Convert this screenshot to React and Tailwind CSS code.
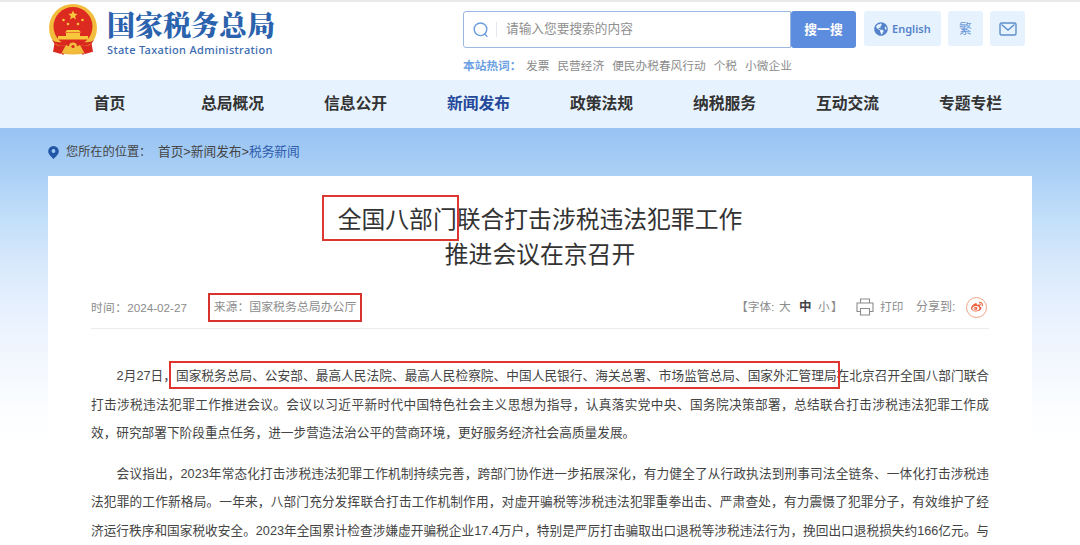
import React from 'react';
import { FaGlobeAmericas, FaWeibo } from 'react-icons/fa';

const navItems = ['首页', '总局概况', '信息公开', '新闻发布', '政策法规', '纳税服务', '互动交流', '专题专栏'];
const hotWords = ['发票', '民营经济', '便民办税春风行动', '个税', '小微企业'];

const Emblem = () => (
  <svg className="w-[50px] h-[52px] shrink-0" viewBox="0 0 50 52">
    <path d="M7 36l-2 12 6-1 4 4 5-5h10l5 5 4-4 6 1-2-12z" fill="#d8281f" />
    <path d="M14 44q11 3 22 0l1 5q-12 3-24 0z" fill="#f0b93a" />
    <circle cx="25" cy="24" r="24" fill="#f2bd3c" />
    <circle cx="25" cy="22.500" r="19.500" fill="#dd2a20" />
    <path d="M25 6.500l1.300 3.100 3.300.3-2.500 2.200.8 3.300-2.900-1.800-2.900 1.800.8-3.300-2.500-2.200 3.300-.3z" fill="#f8c83c" />
    <g fill="#f8c83c">
      <circle cx="15.500" cy="16" r="1.300" />
      <circle cx="20" cy="20" r="1.300" />
      <circle cx="30" cy="20" r="1.300" />
      <circle cx="34.500" cy="16" r="1.300" />
      <path d="M19 26h12l2 2.500H17zM18 29h14v3h-14zM10 32h30v3.500H10z" />
    </g>
    <path d="M4 36q4 3 10 2l7-1 4 2 4-2 7 1q6 1 10-2l-3 4q-6 3-11 1l-7 3-7-3q-5 2-11-1z" fill="#d8281f" />
    <path d="M7 41q6 1 11 0l-5 9-7-2zM43 41q-6 1-11 0l5 9 7-2z" fill="#d8281f" />
    <circle cx="25" cy="42.500" r="4" fill="#f2bd3c" />
    <circle cx="25" cy="42.500" r="1.600" fill="#d8281f" />
  </svg>
);

const SearchIcon = () => (
  <svg className="w-4 h-4 shrink-0" viewBox="0 0 16 16" fill="none" stroke="#6c9ddf" strokeWidth="1.4">
    <circle cx="7.500" cy="7.300" r="6.300" />
    <path d="M11.600 11.800l2.300 2.600" strokeLinecap="round" />
  </svg>
);

const MailIcon = () => (
  <svg className="w-[18px] h-[14px]" viewBox="0 0 18 14" fill="none" stroke="#5f8fcb" strokeWidth="1.4">
    <rect x="1" y="1" width="16" height="12" rx="1.500" />
    <path d="M2.500 2.500L9 8l6.500-5.500" />
  </svg>
);

const PinIcon = () => (
  <svg className="w-[11px] h-[13px] shrink-0" viewBox="0 0 11 13">
    <path d="M5.500 0A5.300 5.300 0 0 0 .2 5.300C.2 8.500 3.500 11 5.500 13c2-2 5.300-4.500 5.300-7.700A5.300 5.300 0 0 0 5.500 0z" fill="#2257a6" />
    <circle cx="5.500" cy="5" r="1.900" fill="#a3caf5" />
  </svg>
);

const PrinterIcon = () => (
  <svg className="w-[18px] h-[18px]" viewBox="0 0 18 18" fill="none" stroke="#8c8c8c" strokeWidth="1.100">
    <path d="M4.500 5V1h9v4" />
    <path d="M4.500 13.500H1V5h16v8.500h-3.500" />
    <path d="M4.500 10.500h9V17h-9z" />
  </svg>
);

const Header = () => (
  <header className="h-20 border-t-2 border-[#e9e9ec] flex pl-12">
    <div className="w-[415px] flex gap-[9px] pt-[2px]">
      <Emblem />
      <div className="pt-[2px]">
        <div className="font-['Noto_Serif_CJK_SC','Noto_Sans_CJK_SC',serif] font-black text-[28px] leading-[37px] text-[#2b62ad] whitespace-nowrap">
          国家税务总局
        </div>
        <div className="font-['Noto_Sans',sans-serif] font-medium text-[11px] leading-[14px] tracking-[0.340px] text-[#3a6bb0] whitespace-nowrap">
          State Taxation Administration
        </div>
      </div>
    </div>
    <div className="pt-[9px]">
      <div className="flex">
        <div className="w-[328px] h-[37px] border border-[#9ab8e2] rounded-l-[3px] flex items-center pl-[9px]">
          <SearchIcon />
          <span className="w-px h-[15px] bg-[#e2e6ee] ml-[7px] mr-[9px]" />
          <span className="text-[12.700px] text-[#8f8f8f]">请输入您要搜索的内容</span>
        </div>
        <button className="w-[65px] h-[37px] bg-[#5b8cdd] rounded-[3px] text-white font-bold text-[12.800px]">搜一搜</button>
        <div className="w-[77px] h-[35px] ml-[8px] bg-[#e6f2fe] rounded-[3px] flex items-center pl-[10px] gap-1 text-[#5583cb]">
          <FaGlobeAmericas className="w-[14px] h-[14px]" />
          <span className="pt-px font-['Noto_Sans',sans-serif] font-semibold text-[11px]">English</span>
        </div>
        <div className="w-[35px] h-[35px] ml-[7px] bg-[#e6f2fe] rounded-[3px] flex items-center justify-center text-[#6a98d8] text-[12.800px]">繁</div>
        <div className="w-[35px] h-[35px] ml-[7px] bg-[#e6f2fe] rounded-[3px] flex items-center justify-center pt-px">
          <MailIcon />
        </div>
      </div>
      <div className="flex text-[11.700px] leading-4 mt-[10px] text-[#8a8a8a] whitespace-nowrap">
        <span className="font-bold text-[#6c9fe3] w-[63px]">本站热词：</span>
        <div className="flex gap-2">
          {hotWords.map((word) => (
            <span key={word}>{word}</span>
          ))}
        </div>
      </div>
    </div>
  </header>
);

const Nav = () => (
  <nav className="h-12 bg-[#e6f2fe] px-12 grid grid-cols-8">
    {navItems.map((item) => (
      <div
        key={item}
        className={`flex items-center justify-center text-[15.800px] font-bold ${item === '新闻发布' ? 'text-[#24489a]' : 'text-[#333]'}`}
      >
        {item}
      </div>
    ))}
  </nav>
);

const Line = ({ children, indent }) => (
  <span className={`block h-[28.500px] whitespace-nowrap [text-align-last:justify] ${indent ? 'pl-[25.600px]' : ''}`}>
    {children}
  </span>
);

const ArticleMeta = () => (
  <div className="h-[43px] mt-[14px] border-b border-[#ececec] flex items-center text-xs text-[#8c8c8c] whitespace-nowrap">
    <span className="w-[96px] pt-px text-[11.700px] [text-align-last:justify]">时间：2024-02-27</span>
    <span className="ml-[21px] w-[154px] h-[29px] pt-[2px] border-2 border-[#d8322c] flex items-center justify-center text-[11.900px]">
      来源：国家税务总局办公厅
    </span>
    <div className="ml-auto mr-[2px] flex items-center text-[11.700px]">
      <span className="w-[43px]">【字体:</span>
      <span className="w-5">大</span>
      <b className="w-[19px] text-[#444] text-[12.500px]">中</b>
      <span className="w-[13px]">小</span>
      <span className="w-[25px]">】</span>
      <PrinterIcon />
      <span className="ml-[6px] w-9">打印</span>
      <span className="w-[50px] text-xs">分享到:</span>
      <span className="w-[21px] h-[21px] rounded-full border border-[#f1a184] flex items-center justify-center">
        <FaWeibo className="w-3 h-3 text-[#e8603c]" />
      </span>
    </div>
  </div>
);

const Article = () => (
  <article className="h-[369px] bg-white px-[43px] pt-[26px]">
    <h1 className="text-[23.800px] leading-[35px] text-center text-[#333]">
      <span className="relative">
        <span className="absolute -left-4 -top-[11px] w-[137px] h-[46px] border-2 border-[#dc3730]" />
        全国八部门
      </span>
      联合打击涉税违法犯罪工作
      <br />
      推进会议在京召开
    </h1>
    <ArticleMeta />
    <div className="pt-[33px] text-[12.660px] leading-[28.500px] text-[#444] w-[898px]">
      <p className="mb-3">
        <Line indent>
          2月27日，
          <span className="relative">
            <span className="absolute -left-[7px] -top-[8px] -right-[3px] h-[28px] border-2 border-[#e0342e]" />
            国家税务总局、公安部、最高人民法院、最高人民检察院、中国人民银行、海关总署、市场监管总局、国家外汇管理局
          </span>
          在北京召开全国八部门联合
        </Line>
        <Line>打击涉税违法犯罪工作推进会议。会议以习近平新时代中国特色社会主义思想为指导，认真落实党中央、国务院决策部署，总结联合打击涉税违法犯罪工作成</Line>
        <span className="block h-[28.500px]">效，研究部署下阶段重点任务，进一步营造法治公平的营商环境，更好服务经济社会高质量发展。</span>
      </p>
      <p>
        <Line indent>会议指出，2023年常态化打击涉税违法犯罪工作机制持续完善，跨部门协作进一步拓展深化，有力健全了从行政执法到刑事司法全链条、一体化打击涉税违</Line>
        <Line>法犯罪的工作新格局。一年来，八部门充分发挥联合打击工作机制作用，对虚开骗税等涉税违法犯罪重拳出击、严肃查处，有力震慑了犯罪分子，有效维护了经</Line>
        <Line>济运行秩序和国家税收安全。2023年全国累计检查涉嫌虚开骗税企业17.4万户，特别是严厉打击骗取出口退税等涉税违法行为，挽回出口退税损失约166亿元。与</Line>
      </p>
    </div>
  </article>
);

export default function App() {
  return (
    <div className="w-[1080px] h-[545px] overflow-hidden bg-white font-['Liberation_Sans','Noto_Sans_CJK_SC',sans-serif]">
      <Header />
      <Nav />
      <main className="h-[417px] px-12 bg-[linear-gradient(to_bottom,#97c3f3_0px,#acd0f6_47px,#c2dff9_90px,#d5e7fb_130px,#e6f0fe_177px,#f2f7fe_230px,#fbfdff_280px,#ffffff_317px)]">
        <div className="h-12 pt-px flex items-center text-[12.200px] text-[#444] whitespace-nowrap">
          <PinIcon />
          <span className="ml-[7px] w-[92px]">您所在的位置：</span>
          <span className="text-[12.700px]">首页&gt;新闻发布&gt;<span className="text-[#2c5cab]">税务新闻</span></span>
        </div>
        <Article />
      </main>
    </div>
  );
}
